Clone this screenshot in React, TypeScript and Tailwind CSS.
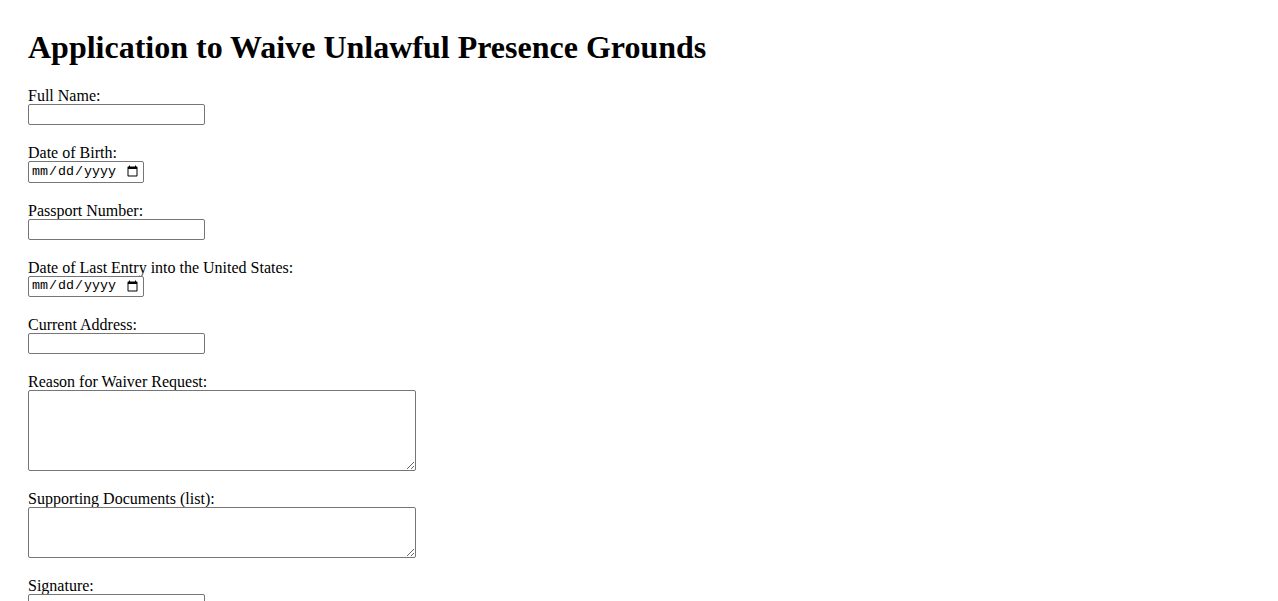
import React from "react";

const fields: { label: string; kind: "text" | "date" | "area"; rows?: number }[] = [
  { label: "Full Name:", kind: "text" },
  { label: "Date of Birth:", kind: "date" },
  { label: "Passport Number:", kind: "text" },
  { label: "Date of Last Entry into the United States:", kind: "date" },
  { label: "Current Address:", kind: "text" },
  { label: "Reason for Waiver Request:", kind: "area", rows: 5 },
  { label: "Supporting Documents (list):", kind: "area", rows: 3 },
  { label: "Signature:", kind: "text" },
  { label: "Date:", kind: "date" },
];

function Field({ label, kind, rows }: (typeof fields)[number]) {
  const id = label.toLowerCase().replace(/[^a-z]+/g, "-");
  return (
    <div className="flex flex-col items-start mb-[19px]">
      <label htmlFor={id} className="leading-[18px] h-[17px] text-black">
        {label}
      </label>
      {kind === "text" && (
        <input
          id={id}
          type="text"
          className="w-[177px] h-[21px] border border-[#767676] rounded-[2px] bg-white px-[2px] text-[13.33px] font-['Liberation_Sans',Arial,sans-serif]"
        />
      )}
      {kind === "date" && (
        <input
          id={id}
          type="date"
          className="w-[116px] h-[21.5px] border border-[#767676] rounded-[2px] bg-white px-[2px] text-[13.33px] font-['Liberation_Mono',monospace]"
        />
      )}
      {kind === "area" && (
        <textarea
          id={id}
          rows={rows}
          className={`w-[388px] ${rows === 5 ? "h-[81px]" : "h-[51px]"} border border-[#767676] rounded-[2px] bg-white p-[2px] text-[13.33px] font-['Liberation_Mono',monospace] resize`}
        />
      )}
    </div>
  );
}

export default function App() {
  return (
    <div className="min-h-screen bg-white px-[28px] pt-[29px] font-['Liberation_Serif','Times_New_Roman',serif] text-[16px] text-black">
      <h1 className="text-[32px] font-bold leading-[37px] mb-[21px]">
        Application to Waive Unlawful Presence Grounds
      </h1>
      <form>
        {fields.map((f) => (
          <Field key={f.label} {...f} />
        ))}
      </form>
    </div>
  );
}
